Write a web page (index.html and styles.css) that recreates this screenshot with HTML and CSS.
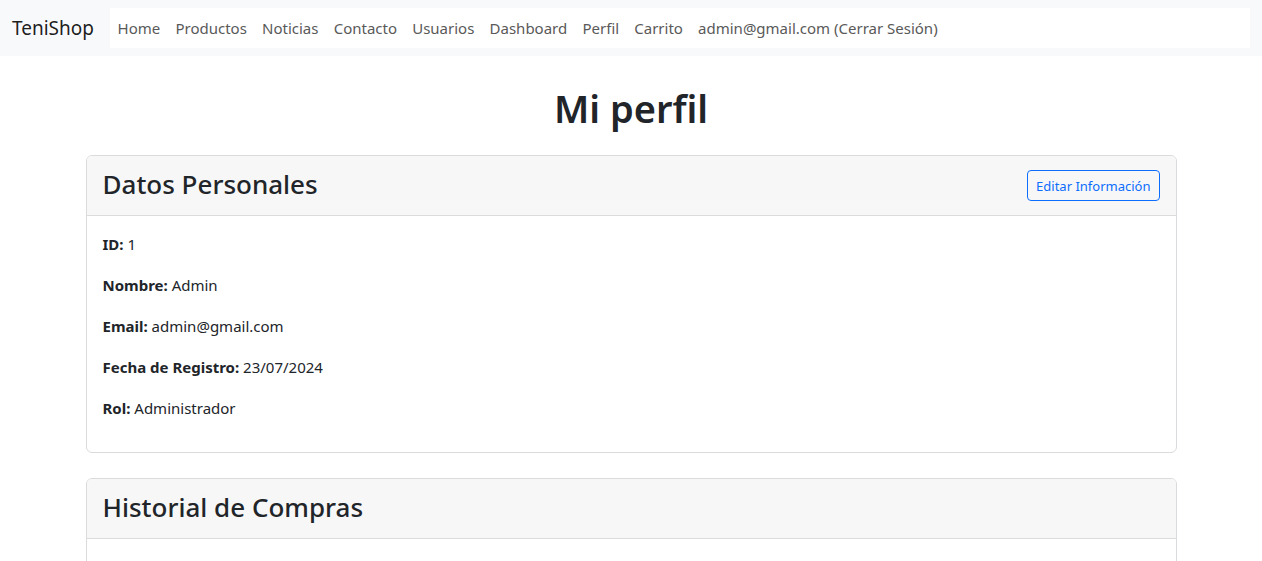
FILE: index.html
```html
<!DOCTYPE html>
<html lang="es">
<head>
<meta charset="utf-8">
<title>Mi perfil - TeniShop</title>
<link rel="stylesheet" href="styles.css">
</head>
<body>
<nav class="navbar">
  <a class="brand" href="#">TeniShop</a>
  <ul class="nav-links">
    <li><a href="#">Home</a></li>
    <li><a href="#">Productos</a></li>
    <li><a href="#">Noticias</a></li>
    <li><a href="#">Contacto</a></li>
    <li><a href="#">Usuarios</a></li>
    <li><a href="#">Dashboard</a></li>
    <li><a href="#">Perfil</a></li>
    <li><a href="#">Carrito</a></li>
    <li><a href="#">admin@gmail.com (Cerrar Sesión)</a></li>
  </ul>
</nav>
<main class="container">
  <h1 class="page-title">Mi perfil</h1>
  <section class="card">
    <div class="card-header">
      <h3 class="card-title">Datos Personales</h3>
      <button class="btn-outline" type="button">Editar Información</button>
    </div>
    <div class="card-body">
      <p><strong>ID:</strong> 1</p>
      <p><strong>Nombre:</strong> Admin</p>
      <p><strong>Email:</strong> admin@gmail.com</p>
      <p><strong>Fecha de Registro:</strong> 23/07/2024</p>
      <p><strong>Rol:</strong> Administrador</p>
    </div>
  </section>
  <section class="card">
    <div class="card-header">
      <h3 class="card-title">Historial de Compras</h3>
    </div>
    <div class="card-body">
      <p>No has realizado compras todavía.</p>
    </div>
  </section>
</main>
</body>
</html>
```
FILE: styles.css
```css
* { box-sizing: border-box; }
html, body {
  margin: 0;
  padding: 0;
  background: #fff;
}
body {
  font-family: "Noto Sans", "Open Sans", "DejaVu Sans", sans-serif;
  font-size: 15px;
  line-height: 24px;
  color: #212529;
}
.navbar {
  display: flex;
  align-items: center;
  background: #f8f9fa;
  padding: 8px 12px;
  height: 56px;
}
.brand {
  font-size: 19px;
  color: rgba(0,0,0,0.9);
  text-decoration: none;
  margin-right: 16px;
  line-height: 30px;
}
.nav-links {
  flex: 1;
  display: flex;
  list-style: none;
  margin: 0;
  padding: 0;
  background: #fff;
  height: 40px;
  align-items: center;
}
.nav-links a {
  display: block;
  padding: 8px 7.6px;
  color: #595959;
  text-decoration: none;
  line-height: 24px;
}
.container {
  max-width: 1091px;
  margin: 0 auto;
  padding-top: 28px;
}
.page-title {
  margin: 0 0 23px;
  text-align: center;
  font-size: 38px;
  font-weight: 600;
  line-height: 48px;
}
.card {
  border: 1px solid #dadbdc;
  border-radius: 6px;
  margin-bottom: 25px;
  overflow: hidden;
}
.card-header {
  display: flex;
  align-items: center;
  justify-content: space-between;
  background: #f7f7f7;
  border-bottom: 1px solid #dadbdc;
  padding: 0 16px;
  height: 60px;
}
.card-title {
  margin: 0 0 3px;
  font-size: 26px;
  font-weight: 500;
  line-height: 34px;
}
.btn-outline {
  font-family: inherit;
  font-size: 13px;
  line-height: 20px;
  padding: 4px 8px;
  color: #0d6efd;
  background: transparent;
  border: 1px solid #0d6efd;
  border-radius: 4px;
  height: 31px;
}
.card-body {
  padding: 16px 16px 15px;
}
.card-body p {
  margin: 0 0 17px;
}
```
